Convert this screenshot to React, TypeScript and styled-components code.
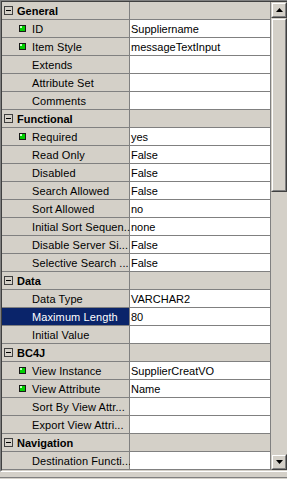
import React from "react";
import styled, { createGlobalStyle } from "styled-components";

const GlobalStyle = createGlobalStyle`
  html, body { margin: 0; padding: 0; background: #d4d0c8; }
  body { font-family: "Liberation Sans", Arial, sans-serif; font-size: 11px; color: #000; }
`;

type Row =
  | { kind: "group"; label: string }
  | { kind: "prop"; label: string; value?: string; required?: boolean; selected?: boolean };

const rows: Row[] = [
  { kind: "group", label: "General" },
  { kind: "prop", label: "ID", value: "Suppliername", required: true },
  { kind: "prop", label: "Item Style", value: "messageTextInput", required: true },
  { kind: "prop", label: "Extends" },
  { kind: "prop", label: "Attribute Set" },
  { kind: "prop", label: "Comments" },
  { kind: "group", label: "Functional" },
  { kind: "prop", label: "Required", value: "yes", required: true },
  { kind: "prop", label: "Read Only", value: "False" },
  { kind: "prop", label: "Disabled", value: "False" },
  { kind: "prop", label: "Search Allowed", value: "False" },
  { kind: "prop", label: "Sort Allowed", value: "no" },
  { kind: "prop", label: "Initial Sort Sequen...", value: "none" },
  { kind: "prop", label: "Disable Server Si...", value: "False" },
  { kind: "prop", label: "Selective Search ...", value: "False" },
  { kind: "group", label: "Data" },
  { kind: "prop", label: "Data Type", value: "VARCHAR2" },
  { kind: "prop", label: "Maximum Length", value: "80", selected: true },
  { kind: "prop", label: "Initial Value" },
  { kind: "group", label: "BC4J" },
  { kind: "prop", label: "View Instance", value: "SupplierCreatVO", required: true },
  { kind: "prop", label: "View Attribute", value: "Name", required: true },
  { kind: "prop", label: "Sort By View Attr..." },
  { kind: "prop", label: "Export View Attri..." },
  { kind: "group", label: "Navigation" },
  { kind: "prop", label: "Destination Functi..." },
];

const Panel = styled.div`
  display: flex;
  width: 287px;
  border-top: 1px solid #808080;
  border-left: 1px solid #808080;
  border-bottom: 1px solid #fff;
  box-sizing: border-box;
`;

const Inner = styled.div`
  display: flex;
  flex: 1;
  border-top: 1px solid #404040;
  border-left: 1px solid #404040;
  border-bottom: 1px solid #d4d0c8;
`;

const Grid = styled.div`
  display: grid;
  grid-template-columns: 127px 140px;
  grid-auto-rows: 17px;
  gap: 1px;
  background: #808080;
  padding-bottom: 1px;
  padding-right: 1px;
`;

const NameCell = styled.div<{ $selected?: boolean; $group?: boolean }>`
  display: flex;
  align-items: center;
  padding-left: ${(p) => (p.$group ? 2 : 16)}px;
  background: ${(p) => (p.$selected ? "#0a246a" : "#d4d0c8")};
  color: ${(p) => (p.$selected ? "#fff" : "#000")};
  font-weight: ${(p) => (p.$group ? "bold" : "normal")};
  white-space: nowrap;
  min-width: 0;
`;

const ValueCell = styled.div<{ $group?: boolean }>`
  display: flex;
  align-items: center;
  padding-left: 1px;
  background: ${(p) => (p.$group ? "#d4d0c8" : "#fff")};
  white-space: nowrap;
  overflow: hidden;
`;

const Marker = styled.span`
  display: inline-flex;
  width: 14px;
  padding-left: 1px;
  flex: none;
  box-sizing: border-box;
`;

const Label = styled.span`
  letter-spacing: 0.1px;
`;

const GroupLabel = styled.span`
  margin-left: 4px;
`;

const ScrollBar = styled.div`
  width: 16px;
  display: flex;
  flex-direction: column;
  background: #d4d0c8;
`;

const Raised = styled.div<{ $thumb?: boolean }>`
  box-sizing: border-box;
  flex: ${(p) => (p.$thumb ? "0 0 174px" : "0 0 16px")};
  border-top: 1px solid #d4d0c8;
  border-left: 1px solid #d4d0c8;
  border-right: 1px solid #404040;
  border-bottom: 1px solid #404040;
  background: #d4d0c8;
  display: flex;
`;

const RaisedInner = styled.div`
  box-sizing: border-box;
  flex: 1;
  border-top: 1px solid #fff;
  border-left: 1px solid #fff;
  border-right: 1px solid #808080;
  border-bottom: 1px solid #808080;
  display: flex;
  align-items: center;
  justify-content: center;
`;

const Track = styled.div`
  flex: 1;
`;

const BottomStrip = styled.div`
  height: 5px;
  border-bottom: 1px solid #808080;
  width: 287px;
`;

const Bullet = () => (
  <svg width="7" height="7" viewBox="0 0 7 7">
    <rect x="0" y="0" width="7" height="7" fill="#1a1a1a" />
    <rect x="1" y="1" width="5" height="5" fill="#00d000" />
    <rect x="1" y="1" width="2" height="2" fill="#c8ffc8" />
  </svg>
);

const Collapse = () => (
  <svg width="9" height="9" viewBox="0 0 9 9">
    <rect x="0.5" y="0.5" width="8" height="8" fill="#d4d0c8" stroke="#404040" />
    <rect x="2" y="4" width="5" height="1" fill="#000" />
  </svg>
);

const Arrow = ({ up }: { up?: boolean }) => (
  <svg width="7" height="4" viewBox="0 0 7 4">
    <polygon points={up ? "3.5,0 7,4 0,4" : "0,0 7,0 3.5,4"} fill="#000" />
  </svg>
);

export default function App() {
  return (
    <>
      <GlobalStyle />
      <Panel>
        <Inner>
          <Grid>
            {rows.map((r, i) =>
              r.kind === "group" ? (
                <React.Fragment key={i}>
                  <NameCell $group>
                    <Collapse />
                    <GroupLabel>{r.label}</GroupLabel>
                  </NameCell>
                  <ValueCell $group />
                </React.Fragment>
              ) : (
                <React.Fragment key={i}>
                  <NameCell $selected={r.selected}>
                    <Marker>{r.required && <Bullet />}</Marker>
                    <Label>{r.label}</Label>
                  </NameCell>
                  <ValueCell>{r.value}</ValueCell>
                </React.Fragment>
              )
            )}
          </Grid>
          <ScrollBar>
            <Raised>
              <RaisedInner>
                <Arrow up />
              </RaisedInner>
            </Raised>
            <Raised $thumb>
              <RaisedInner />
            </Raised>
            <Track />
            <Raised>
              <RaisedInner>
                <Arrow />
              </RaisedInner>
            </Raised>
          </ScrollBar>
        </Inner>
      </Panel>
      <BottomStrip />
    </>
  );
}
